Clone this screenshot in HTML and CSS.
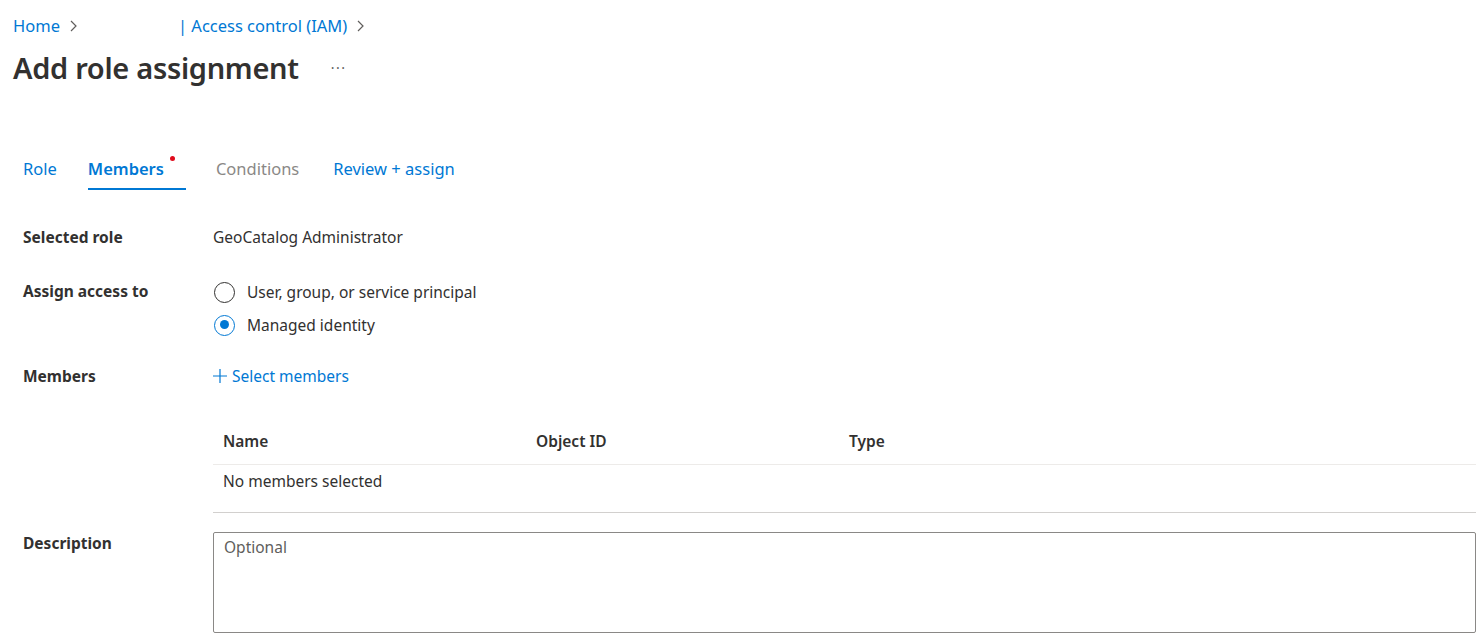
FILE: index.html
```html
<!DOCTYPE html>
<html lang="en">
<head>
  <meta charset="UTF-8">
  <link rel="stylesheet" href="styles.css">
  <title>Add role assignment</title>
</head>
<body>
  <div class="page">
    <nav class="crumbs">
      <a class="crumb" href="#">Home</a>
      <svg class="chev" width="7" height="12" viewBox="0 0 7 12"><path d="M1 1l5 5-5 5" fill="none" stroke="#605e5c" stroke-width="1.2"/></svg>
      <a class="crumb crumb-iam" href="#">| Access control (IAM)</a>
      <svg class="chev" width="7" height="12" viewBox="0 0 7 12"><path d="M1 1l5 5-5 5" fill="none" stroke="#605e5c" stroke-width="1.2"/></svg>
    </nav>
    <div class="title-row">
      <h1 class="title">Add role assignment</h1>
      <span class="more">&middot;&middot;&middot;</span>
    </div>

    <div class="tabs">
      <a class="tab" href="#">Role</a>
      <a class="tab active" href="#">Members<span class="dot"></span></a>
      <span class="tab disabled">Conditions</span>
      <a class="tab" href="#">Review + assign</a>
    </div>

    <div class="form">
      <div class="label row-role">Selected role</div>
      <div class="value row-role">GeoCatalog Administrator</div>

      <div class="label row-access">Assign access to</div>
      <div class="value row-access">
        <label class="radio"><span class="circle"></span>User, group, or service principal</label>
        <label class="radio"><span class="circle checked"></span>Managed identity</label>
      </div>

      <div class="label row-members">Members</div>
      <div class="value row-members">
        <a class="add-link" href="#">
          <svg class="plus" width="14" height="14" viewBox="0 0 14 14"><path d="M7 0v14M0 7h14" stroke="#0078d4" stroke-width="1.2"/></svg>
          Select members
        </a>
      </div>

      <div></div>
      <div class="value">
        <div class="table">
          <div class="thead">
            <div class="cell">Name</div>
            <div class="cell">Object ID</div>
            <div class="cell">Type</div>
          </div>
          <div class="trow">
            <div class="cell">No members selected</div>
          </div>
        </div>
      </div>

      <div class="label row-desc">Description</div>
      <div class="value row-desc">
        <div class="textarea">Optional</div>
      </div>
    </div>
  </div>
</body>
</html>
```

FILE: styles.css
```css
body {
  margin: 0;
  background: #fff;
  font-family: "Noto Sans", "Open Sans", sans-serif;
  font-size: 15.5px;
  color: #323130;
}

a {
  text-decoration: none;
}

.page {
  padding: 13px 2px 0 13px;
}

/* breadcrumb */
.crumbs {
  display: flex;
  align-items: center;
  height: 24px;
  font-size: 16.5px;
}

.crumb {
  color: #0078d4;
}

.crumb-iam {
  margin-left: 101px;
}

.chev {
  margin-left: 10px;
  margin-top: 1px;
}

.title-row {
  display: flex;
  align-items: center;
  height: 40px;
  margin-top: 10px;
}

.title {
  margin: 0;
  font-size: 29px;
  font-weight: 600;
  color: #323130;
  letter-spacing: -0.3px;
}

.more {
  margin-left: 32px;
  color: #605e5c;
  font-size: 14px;
  letter-spacing: 1.5px;
}

/* tabs */
.tabs {
  display: flex;
  align-items: flex-start;
  margin-top: 65px;
  padding-left: 10px;
  height: 38px;
}

.tab {
  position: relative;
  color: #0078d4;
  font-size: 16.5px;
  line-height: 34px;
  margin-right: 31px;
}

.tab.active {
  font-weight: 600;
  border-bottom: 2px solid #0078d4;
  padding-right: 22px;
  margin-right: 30px;
  height: 36px;
}

.tab.disabled {
  color: #8a8886;
  margin-right: 34px;
}

.dot {
  position: absolute;
  top: 4px;
  right: 11px;
  width: 5px;
  height: 5px;
  border-radius: 50%;
  background: #e00b1c;
}

/* form */
.form {
  display: grid;
  grid-template-columns: 190px 1fr;
  padding-left: 10px;
  margin-top: 37px;
}

.label {
  font-weight: 700;
  line-height: 20px;
}

.value {
  line-height: 20px;
}

.row-role {
  margin-bottom: 34px;
}

.row-access {
  margin-bottom: 30px;
}

.radio {
  display: flex;
  align-items: center;
  height: 22px;
  margin-bottom: 11px;
  margin-left: 1px;
}

.radio:last-child {
  margin-bottom: 0;
}

.circle {
  box-sizing: border-box;
  width: 21px;
  height: 21px;
  border: 1.5px solid #323130;
  border-radius: 50%;
  margin-right: 12px;
  position: relative;
}

.circle.checked {
  border-color: #0078d4;
}

.circle.checked::after {
  content: "";
  position: absolute;
  left: 4.5px;
  top: 4.5px;
  width: 9px;
  height: 9px;
  border-radius: 50%;
  background: #0078d4;
}

.row-members {
  margin-bottom: 32px;
}

.add-link {
  color: #0078d4;
  display: inline-flex;
  align-items: center;
}

.plus {
  margin-right: 5px;
  margin-top: -1px;
}

/* members table */
.thead,
.trow {
  display: grid;
  grid-template-columns: 313px 313px 1fr;
}

.thead {
  height: 45px;
  align-items: center;
  border-bottom: 1px solid #edebe9;
  font-weight: 600;
}

.trow {
  height: 47px;
  border-bottom: 1px solid #d2d0ce;
  align-items: start;
}

.trow .cell {
  padding-top: 6px;
}

.cell {
  padding-left: 10px;
}

.row-desc {
  margin-top: 19px;
}

.label.row-desc {
  margin-top: 20px;
}

.textarea {
  box-sizing: border-box;
  height: 101px;
  border: 1px solid #8a8886;
  border-radius: 2px;
  padding: 4px 10px;
  color: #605e5c;
}
```
